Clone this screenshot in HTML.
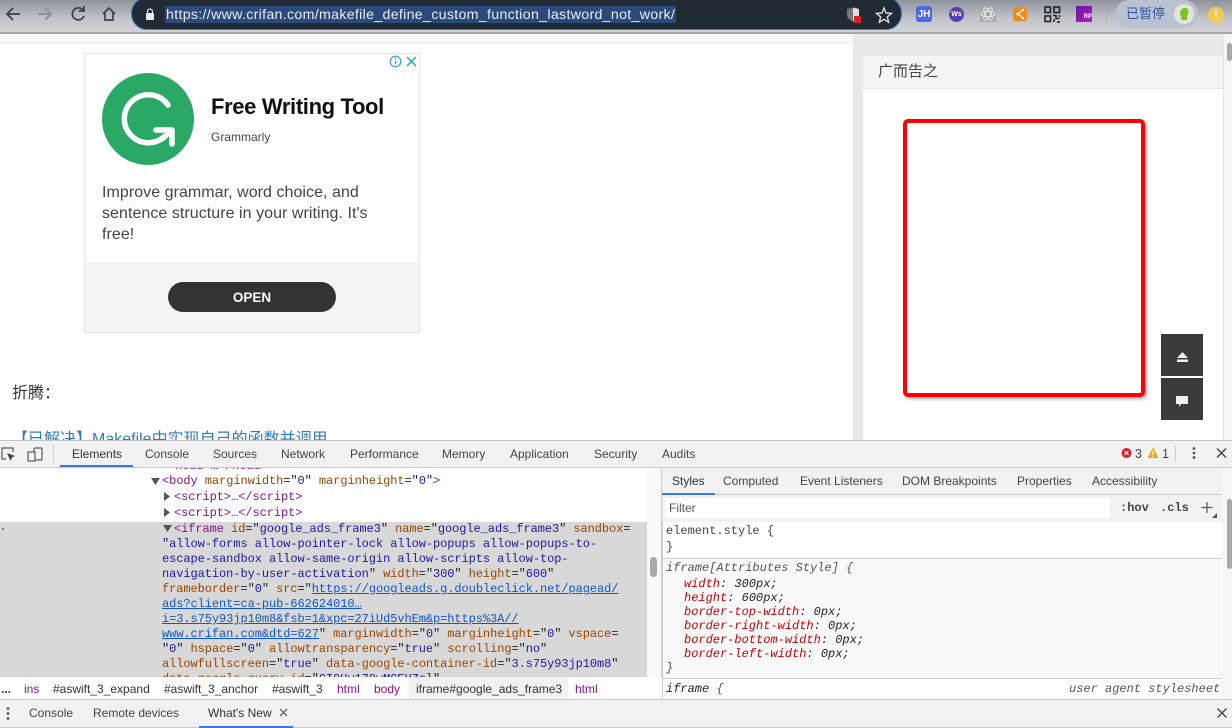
<!DOCTYPE html>
<html><head><meta charset="utf-8">
<style>
html,body{margin:0;padding:0;width:1232px;height:728px;overflow:hidden;background:#fff}
body{position:relative;font-family:"Liberation Sans","Noto Sans CJK SC",sans-serif}
.b{position:absolute}
.t{position:absolute;white-space:pre;line-height:16px}
.tab{font-size:12px;color:#444}
.m{font-family:"Liberation Mono",monospace;font-size:12px;line-height:15px;letter-spacing:-.07px;color:#222}
.tg{color:#881280}.at{color:#994500}.v{color:#1a1aa6}.l{color:#1155cc;text-decoration:underline}
.cr{font-size:12px;color:#333}.pu{color:#881280}
.s{font-family:"Liberation Mono",monospace;font-size:12px;line-height:14px;font-style:italic;color:#222}
.r{color:#c80000}
svg{position:absolute;overflow:visible}
</style></head><body>

<!-- browser toolbar -->
<div class="b" style="left:0;top:0;width:1232px;height:33px;background:linear-gradient(#8f939b,#c0c3c8 55%,#d2d4d7)"></div>
<div class="b" style="left:0;top:32px;width:1232px;height:2px;background:#a5a7ab"></div>
<svg style="left:0;top:0" width="130" height="30" fill="none" stroke-width="1.7">
<path d="M20 14H8M13 8l-6 6 6 6" stroke="#3c4043"/>
<path d="M38 14h12M45 8l6 6-6 6" stroke="#8a8d92"/>
<path d="M83 10a6 6 0 1 0 1 6M84 6v5h-5" stroke="#3c4043"/>
<path d="M103 14l6-6 6 6M105 13v7h8v-7" stroke="#3c4043"/>
</svg>
<div class="b" style="left:131px;top:-3px;width:769px;height:31px;background:#212b36;border:1px solid #3a86c4;border-radius:16px"></div>
<svg style="left:145px;top:8px" width="10" height="13"><path d="M2.500 5V3.500a2.500 2.500 0 0 1 5 0V5" fill="none" stroke="#ddd" stroke-width="1.200"/><rect x="1" y="5" width="8" height="7" rx="1" fill="#e8e8e8"/></svg>
<div class="b" style="left:165px;top:6px;width:511px;height:17px;background:#2b4a7c"></div>
<div class="t" style="left:166px;top:7px;font-size:14.200px;color:#e8edf3;line-height:17px;letter-spacing:.31px">https://www.crifan.com/makefile_define_custom_function_lastword_not_work/</div>
<svg style="left:846px;top:7px" width="16" height="16"><path d="M1 2l6-1.500L13 2v6c0 3-3 5-6 6.500C4 13 1 11 1 8z" fill="#777"/><path d="M7 .5L13 2v6c0 3-3 5-6 6.500z" fill="#ddd"/><rect x="8" y="9" width="7" height="7" fill="#d8202a"/></svg>
<svg style="left:876px;top:7px" width="16" height="16"><path d="M8 1l2 5 5.500.4-4.200 3.500 1.400 5.300L8 12.300l-4.700 2.900 1.400-5.300L.5 6.400 6 6z" fill="none" stroke="#dcdcdc" stroke-width="1.400"/></svg>

<div class="b" style="left:916px;top:6px;width:16px;height:16px;background:#4a68e8;border-radius:3px;color:#fff;font:bold 10px/17px 'Liberation Sans';text-align:center">JH</div>
<div class="b" style="left:949px;top:7px;width:15px;height:15px;background:#5a3fb0;border-radius:50%;color:#fff;font:bold 7px/15px 'Liberation Sans';text-align:center">Ws</div>
<div class="b" style="left:980px;top:6px;width:16px;height:16px;background:#a8a8a8"></div>
<svg style="left:980px;top:6px" width="16" height="16" fill="none" stroke="#eee" stroke-width=".9"><ellipse cx="8" cy="8" rx="7" ry="2.800"/><ellipse cx="8" cy="8" rx="7" ry="2.800" transform="rotate(60 8 8)"/><ellipse cx="8" cy="8" rx="7" ry="2.800" transform="rotate(120 8 8)"/></svg>
<div class="b" style="left:1013px;top:7px;width:14px;height:14px;background:#f08a1d;border-radius:2px"></div>
<svg style="left:1013px;top:7px" width="14" height="14"><path d="M5 7l5-4M5 7l5 4" stroke="#fff"/><circle cx="5" cy="7" r="1.500" fill="#fff"/><circle cx="10" cy="3" r="1.300" fill="#fff"/><circle cx="10" cy="11" r="1.300" fill="#fff"/></svg>
<svg style="left:1044px;top:6px" width="16" height="16" fill="none" stroke="#222" stroke-width="1.600"><rect x="1" y="1" width="5.500" height="5.500"/><rect x="10" y="1" width="5.500" height="5.500"/><rect x="1" y="10" width="5.500" height="5.500"/><path d="M9 9.500h3v3h3.500M10 16v-3M13 16h3M15.500 9v2"/></svg>
<div class="b" style="left:1076px;top:6px;width:16px;height:16px;background:linear-gradient(135deg,#5b1d9e,#c413c8);color:#fff;font:bold 6px/22px 'Liberation Sans';text-align:right">RP</div>
<div class="b" style="left:1106px;top:7px;width:1px;height:15px;background:#a8abb0"></div>
<div class="b" style="left:1115px;top:0;width:83px;height:28px;background:#b9c2d0;border-radius:14px"></div>
<div class="t" style="left:1126px;top:6px;font-size:13px;color:#2c55a0">已暂停</div>
<div class="b" style="left:1174px;top:4px;width:20px;height:20px;background:#e4e4da;border-radius:50%"></div>
<svg style="left:1174px;top:4px" width="20" height="20"><path d="M7 16c1-2 0-4-1-6 0-4 2-6 5-6s4 3 3 6c-1 2-1 4-1 6z" fill="#7cc51c"/></svg>
<div class="b" style="left:1208px;top:7px;width:16px;height:16px;background:#f7c948;border-radius:50%;color:#fff;font:bold 12px/16px 'Liberation Sans';text-align:center">!</div>

<!-- page -->
<div class="b" style="left:0;top:34px;width:853px;height:8px;background:#f9f9f9;border-bottom:1px solid #eee"></div>
<div class="b" style="left:853px;top:34px;width:370px;height:406px;background:#e9e9e9"></div>
<div class="b" style="left:863px;top:88px;width:360px;height:352px;background:#fff"></div>
<div class="b" style="left:863px;top:56px;width:360px;height:32px;background:#f5f5f5;border-bottom:1px solid #e6e6e6"></div>
<div class="t" style="left:878px;top:64px;font-size:15px;color:#444">广而告之</div>
<div class="b" style="left:1223px;top:34px;width:9px;height:406px;background:#f6f6f6;border-left:1px solid #e2e2e2;box-sizing:border-box"></div>
<div class="b" style="left:1227px;top:43px;width:5px;height:18px;background:#a8a8a8;border-radius:3px"></div>

<!-- ad -->
<div class="b" style="left:84px;top:53px;width:334px;height:278px;border:1px solid #e4e4e4;background:#fff"></div>
<div class="b" style="left:85px;top:262px;width:334px;height:70px;background:#f4f4f4"></div>
<div class="b" style="left:102px;top:73px;width:92px;height:92px;background:#2aa866;border-radius:50%"></div>
<svg style="left:102px;top:73px" width="92" height="92" fill="none" stroke="#fff" stroke-width="5.500" stroke-linecap="round" stroke-linejoin="round"><path d="M66 32A24 24 0 1 0 63 63"/><path d="M54 57H70V71"/><path d="M70 57L61 66" stroke-width="4.500"/></svg>
<svg style="left:389px;top:55px" width="30" height="13" fill="none" stroke="#2ea3cc" stroke-width="1.200"><circle cx="6.500" cy="6.500" r="5.300"/><path d="M6.500 5.500v4M6.500 3v1.200"/><path d="M18 2l9 9M27 2l-9 9" stroke-width="1.500"/></svg>
<div class="t" style="left:211px;top:94px;font-size:22px;line-height:26px;font-weight:bold;letter-spacing:-.35px;color:#111">Free Writing Tool</div>
<div class="t" style="left:211px;top:129px;font-size:12px;color:#444">Grammarly</div>
<div class="t" style="left:102px;top:182px;font-size:16px;line-height:21px;letter-spacing:.05px;color:#444">Improve grammar, word choice, and
sentence structure in your writing. It's
free!</div>
<div class="b" style="left:168px;top:282px;width:168px;height:30px;background:#333;border-radius:15px;color:#fff;font:bold 13.500px/31px 'Liberation Sans';text-align:center">OPEN</div>

<div class="t" style="left:12px;top:385px;font-size:16px;line-height:18px;color:#333">折腾：</div>
<div class="t" style="left:12px;top:430px;font-size:16px;line-height:20px;color:#2e7cc4">【已解决】Makefile中实现自己的函数并调用</div>

<!-- red box -->
<div class="b" style="left:903px;top:119px;width:234px;height:270px;border:4px solid #f00;border-radius:5px;background:#fff;box-shadow:2px 2px 3px rgba(0,0,0,.35)"></div>
<!-- float buttons -->
<div class="b" style="left:1161px;top:334px;width:42px;height:42px;background:#3a3a3a"></div>
<div class="b" style="left:1161px;top:378px;width:42px;height:42px;background:#3a3a3a"></div>
<svg style="left:1176px;top:351px" width="13" height="12" fill="#eee"><path d="M6.500 1L12 7H1z"/><rect x="1" y="8.500" width="11" height="2.500"/></svg>
<svg style="left:1175px;top:396px" width="14" height="12" fill="#eee"><path d="M1 0h12v8H6l-2 3V8H1z"/></svg>

<!-- devtools -->
<div class="b" style="left:0;top:440px;width:1232px;height:288px;background:#fff"></div>
<div class="b" style="left:0;top:440px;width:1232px;height:28px;background:#f2f2f2;border-top:1px solid #c4c4c4;border-bottom:1px solid #ccc;box-sizing:border-box"></div>
<svg style="left:1px;top:447px" width="44" height="15" fill="none" stroke="#5a5a5a" stroke-width="1.200"><path d="M5 12H1V1h11v4"/><path d="M6 6l8 3-3 1.500L9.500 14z" fill="#444" stroke="none"/><rect x="33" y="1" width="8" height="12" rx="1"/><rect x="27" y="5" width="7" height="9" fill="#f2f2f2"/></svg>
<div class="b" style="left:53px;top:445px;width:1px;height:17px;background:#ccc"></div>
<div class="b" style="left:60px;top:465px;width:73px;height:2px;background:#3b78e7"></div>
<div class="t tab" style="left:72px;top:446px;color:#333">Elements</div>
<div class="t tab" style="left:145px;top:446px">Console</div>
<div class="t tab" style="left:213px;top:446px">Sources</div>
<div class="t tab" style="left:281px;top:446px">Network</div>
<div class="t tab" style="left:350px;top:446px">Performance</div>
<div class="t tab" style="left:442px;top:446px">Memory</div>
<div class="t tab" style="left:510px;top:446px">Application</div>
<div class="t tab" style="left:594px;top:446px">Security</div>
<div class="t tab" style="left:662px;top:446px">Audits</div>
<svg style="left:1121px;top:447px" width="104" height="14"><circle cx="5.500" cy="6" r="5" fill="#d9202c"/><path d="M3.500 4l4 4M7.500 4l-4 4" stroke="#fff" stroke-width="1.200"/><path d="M32 .5l5.500 10.500h-11z" fill="#f0a81e"/><rect x="31.400" y="4" width="1.200" height="4" fill="#fff"/><rect x="31.400" y="8.700" width="1.200" height="1.200" fill="#fff"/><rect x="54" y="-1" width="1" height="15" fill="#ccc"/><circle cx="73" cy="1.500" r="1.400" fill="#555"/><circle cx="73" cy="6" r="1.400" fill="#555"/><circle cx="73" cy="10.500" r="1.400" fill="#555"/><path d="M96 1.500l9 9M105 1.500l-9 9" stroke="#444" stroke-width="1.400"/></svg>
<div class="t tab" style="left:1135px;top:446px;font-size:12.500px">3</div>
<div class="t tab" style="left:1162px;top:446px;font-size:12.500px">1</div>

<!-- elements panel -->
<div class="b" style="left:0;top:522px;width:647px;height:155px;background:#d8d8d8"></div>
<div class="b" style="left:647px;top:468px;width:15px;height:209px;background:#fafafa;border-right:1px solid #ccc;box-sizing:border-box"></div>
<div class="b" style="left:650px;top:557px;width:7px;height:20px;background:#a9a9a9;border-radius:4px"></div>
<div class="b" style="left:150px;top:468px;width:300px;height:4px;overflow:hidden"><div class="t m" style="left:18px;top:-9px;color:#881280">&lt;head&gt;…&lt;/head&gt;</div></div>
<svg style="left:0;top:470px" width="175" height="70" fill="#555"><path d="M151 8h9l-4.500 7z"/><path d="M164 22v9l6-4.500z"/><path d="M164 38v9l6-4.500z"/><path d="M163 55h9l-4.500 7z"/><circle cx="3" cy="59" r="1" fill="#666"/></svg>
<div class="t m" style="left:162px;top:474px"><span class="tg">&lt;body</span> <span class="at">marginwidth</span>="<span class="v">0</span>" <span class="at">marginheight</span>="<span class="v">0</span>"<span class="tg">&gt;</span></div>
<div class="t m tg" style="left:174px;top:490px;color:#881280">&lt;script&gt;<span style="color:#333">…</span>&lt;/script&gt;</div>
<div class="t m tg" style="left:174px;top:506px;color:#881280">&lt;script&gt;<span style="color:#333">…</span>&lt;/script&gt;</div>
<div class="b" style="left:0;top:522px;width:647px;height:155px;overflow:hidden">
<div class="t m" style="left:174px;top:0"><span class="tg">&lt;iframe</span> <span class="at">id</span>="<span class="v">google_ads_frame3</span>" <span class="at">name</span>="<span class="v">google_ads_frame3</span>" <span class="at">sandbox</span>=</div>
<div class="t m v" style="left:162px;top:15px;color:#1a1aa6">"allow-forms allow-pointer-lock allow-popups allow-popups-to-</div>
<div class="t m v" style="left:162px;top:30px;color:#1a1aa6">escape-sandbox allow-same-origin allow-scripts allow-top-</div>
<div class="t m" style="left:162px;top:45px"><span class="v">navigation-by-user-activation</span>" <span class="at">width</span>="<span class="v">300</span>" <span class="at">height</span>="<span class="v">600</span>"</div>
<div class="t m" style="left:162px;top:60px"><span class="at">frameborder</span>="<span class="v">0</span>" <span class="at">src</span>="<span class="l">https://googleads.g.doubleclick.net/pagead/</span></div>
<div class="t m l" style="left:162px;top:75px">ads?client=ca-pub-662624010…</div>
<div class="t m l" style="left:162px;top:90px">i=3.s75y93jp10m8&amp;fsb=1&amp;xpc=27iUd5vhEm&amp;p=https%3A//</div>
<div class="t m" style="left:162px;top:105px"><span class="l">www.crifan.com&amp;dtd=627</span>" <span class="at">marginwidth</span>="<span class="v">0</span>" <span class="at">marginheight</span>="<span class="v">0</span>" <span class="at">vspace</span>=</div>
<div class="t m" style="left:162px;top:120px">"<span class="v">0</span>" <span class="at">hspace</span>="<span class="v">0</span>" <span class="at">allowtransparency</span>="<span class="v">true</span>" <span class="at">scrolling</span>="<span class="v">no</span>"</div>
<div class="t m" style="left:162px;top:135px"><span class="at">allowfullscreen</span>="<span class="v">true</span>" <span class="at">data-google-container-id</span>="<span class="v">3.s75y93jp10m8</span>"</div>
<div class="t m" style="left:162px;top:150px"><span class="at">data-google-query-id</span>="<span class="v">CI0Hy170wMCEHZsl</span>"</div>
</div>

<!-- breadcrumbs -->
<div class="b" style="left:0;top:677px;width:662px;height:22px;background:#fff"></div>
<div class="b" style="left:409px;top:677px;width:159px;height:22px;background:#f2f2f2"></div>
<div class="t cr" style="left:1px;top:681px;font-weight:bold">...</div>
<div class="t cr pu" style="left:24px;top:681px">ins</div>
<div class="t cr" style="left:53px;top:681px">#aswift_3_expand</div>
<div class="t cr" style="left:164px;top:681px">#aswift_3_anchor</div>
<div class="t cr" style="left:272px;top:681px">#aswift_3</div>
<div class="t cr pu" style="left:337px;top:681px">html</div>
<div class="t cr pu" style="left:374px;top:681px">body</div>
<div class="t cr" style="left:416px;top:681px">iframe#google_ads_frame3</div>
<div class="t cr pu" style="left:575px;top:681px">html</div>

<!-- styles -->
<div class="b" style="left:662px;top:468px;width:570px;height:27px;background:#f2f2f2;border-bottom:1px solid #ccc;box-sizing:border-box"></div>
<div class="b" style="left:662px;top:493px;width:53px;height:2px;background:#3b78e7"></div>
<div class="t tab" style="left:672px;top:473px;color:#333">Styles</div>
<div class="t tab" style="left:723px;top:473px">Computed</div>
<div class="t tab" style="left:800px;top:473px">Event Listeners</div>
<div class="t tab" style="left:902px;top:473px">DOM Breakpoints</div>
<div class="t tab" style="left:1017px;top:473px">Properties</div>
<div class="t tab" style="left:1092px;top:473px">Accessibility</div>
<div class="b" style="left:662px;top:495px;width:570px;height:27px;background:#f2f2f2"></div>
<div class="b" style="left:665px;top:498px;width:445px;height:20px;background:#fff"></div>
<div class="t" style="left:669px;top:500px;font-size:12px;color:#555">Filter</div>
<div class="t" style="left:1120px;top:500px;font:bold 12px/16px 'Liberation Mono',monospace;color:#444">:hov</div>
<div class="t" style="left:1160px;top:500px;font:bold 12px/16px 'Liberation Mono',monospace;color:#444">.cls</div>
<svg style="left:1201px;top:502px" width="18" height="17"><path d="M6 0v11M.5 5.500h11" stroke="#555" stroke-width="1.200"/><path d="M16 11v5h-5z" fill="#555"/></svg>
<div class="b" style="left:662px;top:522px;width:560px;height:155px;background:#fff;border-left:1px solid #ccc;box-sizing:border-box"></div>
<div class="b" style="left:662px;top:558px;width:560px;height:121px;background:#fafafa;border-left:1px solid #ccc;border-top:1px solid #ccc;box-sizing:border-box"></div>
<div class="b" style="left:662px;top:678px;width:560px;height:21px;background:#fff;border-left:1px solid #ccc;border-top:1px solid #ccc;box-sizing:border-box"></div>
<div class="b" style="left:1222px;top:468px;width:10px;height:231px;background:#f6f6f6"></div>
<div class="b" style="left:1227px;top:499px;width:5px;height:70px;background:#a9a9a9;border-radius:3px"></div>
<div class="t s" style="left:666px;top:524px;font-style:normal;color:#444">element.style {</div>
<div class="t s" style="left:666px;top:540px;font-style:normal;color:#444">}</div>
<div class="t s" style="left:666px;top:561px;color:#555">iframe[Attributes Style] {</div>
<div class="t s" style="left:684px;top:577px"><span class="r">width</span>: 300px;</div>
<div class="t s" style="left:684px;top:591px"><span class="r">height</span>: 600px;</div>
<div class="t s" style="left:684px;top:605px"><span class="r">border-top-width</span>: 0px;</div>
<div class="t s" style="left:684px;top:619px"><span class="r">border-right-width</span>: 0px;</div>
<div class="t s" style="left:684px;top:633px"><span class="r">border-bottom-width</span>: 0px;</div>
<div class="t s" style="left:684px;top:647px"><span class="r">border-left-width</span>: 0px;</div>
<div class="t s" style="left:666px;top:661px;color:#555">}</div>
<div class="t s" style="left:666px;top:682px">iframe <span style="color:#555">{</span></div>
<div class="t s" style="left:1069px;top:682px;color:#555">user agent stylesheet</div>

<!-- drawer -->
<div class="b" style="left:0;top:699px;width:1232px;height:28px;background:#f2f2f2;border-top:1px solid #c8c8c8;box-sizing:border-box"></div>
<div class="b" style="left:0;top:727px;width:1232px;height:1px;background:#ccc"></div>
<svg style="left:6px;top:707px" width="5" height="14" fill="#555"><circle cx="2" cy="1.500" r="1.400"/><circle cx="2" cy="6.500" r="1.400"/><circle cx="2" cy="11.500" r="1.400"/></svg>
<div class="t tab" style="left:29px;top:705px">Console</div>
<div class="t tab" style="left:93px;top:705px">Remote devices</div>
<div class="t tab" style="left:208px;top:705px;color:#333">What's New</div>
<svg style="left:279px;top:708px" width="9" height="9"><path d="M1 1l7 7M8 1l-7 7" stroke="#555" stroke-width="1.200"/></svg>
<div class="b" style="left:199px;top:726px;width:94px;height:2px;background:#3b78e7"></div>
<svg style="left:1217px;top:708px" width="10" height="10"><path d="M.5.5l9 9M9.500.5l-9 9" stroke="#444" stroke-width="1.400"/></svg>
</body></html>
